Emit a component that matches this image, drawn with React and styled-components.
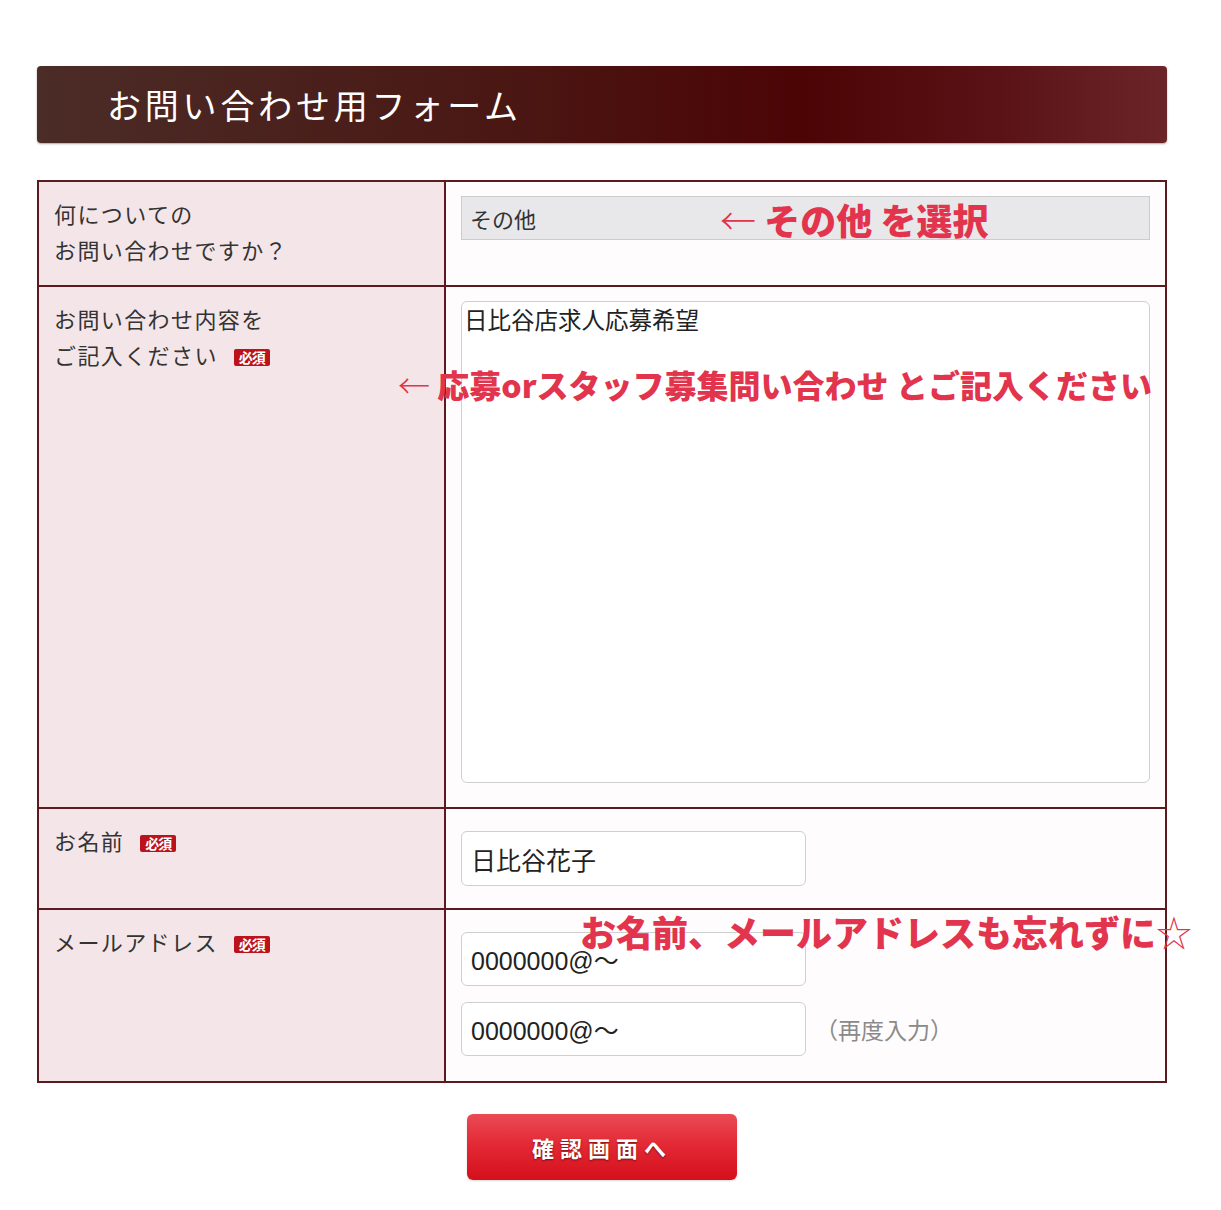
import React from "react";
import styled, { createGlobalStyle } from "styled-components";

const GlobalStyle = createGlobalStyle`
  body {
    margin: 0;
    background: #ffffff;
    font-family: "Noto Sans CJK JP", "Noto Sans", sans-serif;
    color: #333333;
  }
`;

const Page = styled.div`
  position: relative;
  width: 1221px;
  min-height: 1210px;
  padding: 66px 0 0 37px;
  box-sizing: border-box;
`;

const Header = styled.div`
  width: 1130px;
  height: 77px;
  border-radius: 4px;
  display: flex;
  align-items: center;
  padding-left: 70px;
  box-sizing: border-box;
  background: linear-gradient(90deg, #4b2c27 0%, #4a1814 40%, #4c0405 68%, #5a1216 85%, #6b2529 100%);
  box-shadow: 0 1px 2px rgba(0, 0, 0, 0.35);
`;

const HeaderTitle = styled.h1`
  margin: 0;
  font-size: 34px;
  font-weight: 400;
  letter-spacing: 3.8px;
  color: #ffffff;
`;

const FormTable = styled.table`
  width: 1130px;
  margin-top: 37px;
  border-collapse: collapse;
  border: 2px solid #5b1a20;
`;

const LabelCell = styled.th`
  width: 407px;
  box-sizing: border-box;
  padding: 13px 16px 18px 15px;
  background: #f4e6e8;
  border: 2px solid #5b1a20;
  text-align: left;
  vertical-align: top;
  font-size: 22px;
  font-weight: 400;
  line-height: 36px;
  letter-spacing: 1.4px;
  color: #333333;
`;

const FieldCell = styled.td`
  padding: ${({ $pad }) => $pad || "14px 15px"};
  background: #fefcfc;
  border: 2px solid #5b1a20;
  vertical-align: top;
`;

const Badge = styled.span`
  display: inline-flex;
  align-items: center;
  justify-content: center;
  width: 36px;
  height: 17px;
  margin-left: 16px;
  vertical-align: 1px;
  border-radius: 2px;
  background: #bb121b;
  color: #ffffff;
  font-size: 14px;
  font-weight: 700;
  line-height: 1;
  letter-spacing: -1px;
`;

const SelectBox = styled.div`
  height: 44px;
  box-sizing: border-box;
  display: flex;
  align-items: center;
  padding-left: 8px;
  background: #e8e8ea;
  border: 1px solid #cccccc;
  font-size: 22px;
  color: #333333;
`;

const TextArea = styled.div`
  height: 482px;
  box-sizing: border-box;
  padding: 0 2px;
  background: #ffffff;
  border: 1px solid #cfcfcf;
  border-radius: 6px;
  font-size: 23.5px;
  line-height: 34px;
  color: #222222;
`;

const InputRow = styled.div`
  display: flex;
  align-items: center;
  gap: 9px;
  & + & {
    margin-top: 16px;
  }
`;

const TextInput = styled.div`
  width: 345px;
  height: ${({ $h }) => $h || "55px"};
  box-sizing: border-box;
  display: flex;
  align-items: center;
  padding-left: 9px;
  background: #ffffff;
  border: 1px solid #cfcfcf;
  border-radius: 6px;
  font-family: "Liberation Sans", "Noto Sans CJK JP", sans-serif;
  font-size: 25px;
  color: #222222;
`;

const Hint = styled.span`
  font-size: 23px;
  color: #8a8a8a;
`;

const ButtonRow = styled.div`
  width: 1130px;
  display: flex;
  justify-content: center;
  padding-top: 31px;
`;

const SubmitButton = styled.button`
  width: 270px;
  height: 66px;
  border: none;
  border-radius: 6px;
  background: linear-gradient(180deg, #ea4b55 0%, #e32a36 45%, #d50f1c 100%);
  color: #ffffff;
  font-family: "Noto Sans CJK JP", sans-serif;
  font-size: 22px;
  font-weight: 700;
  letter-spacing: 6px;
  text-shadow: 0 1px 2px rgba(80, 0, 0, 0.7);
  box-shadow: 0 1px 2px rgba(0, 0, 0, 0.15);
`;

const Note = styled.div`
  position: absolute;
  left: ${({ $x }) => $x}px;
  top: ${({ $y }) => $y}px;
  font-size: ${({ $size }) => $size}px;
  font-weight: 900;
  line-height: 1;
  white-space: nowrap;
  color: #e2344c;
`;

const Thin = styled.span`
  font-weight: 300;
`;

export default function App() {
  return (
    <>
      <GlobalStyle />
      <Page>
        <Header>
          <HeaderTitle>お問い合わせ用フォーム</HeaderTitle>
        </Header>

        <FormTable>
          <tbody>
            <tr>
              <LabelCell>
                何についての
                <br />
                お問い合わせですか？
              </LabelCell>
              <FieldCell $pad="14px 15px 40px 15px">
                <SelectBox>その他</SelectBox>
              </FieldCell>
            </tr>
            <tr>
              <LabelCell>
                お問い合わせ内容を
                <br />
                ご記入ください<Badge>必須</Badge>
              </LabelCell>
              <FieldCell $pad="14px 15px 24px 15px">
                <TextArea>日比谷店求人応募希望</TextArea>
              </FieldCell>
            </tr>
            <tr>
              <LabelCell>
                お名前<Badge>必須</Badge>
              </LabelCell>
              <FieldCell $pad="22px 15px 22px 15px">
                <TextInput>日比谷花子</TextInput>
              </FieldCell>
            </tr>
            <tr>
              <LabelCell>
                メールアドレス<Badge>必須</Badge>
              </LabelCell>
              <FieldCell $pad="22px 15px 25px 15px">
                <InputRow>
                  <TextInput $h="54px">0000000@〜</TextInput>
                </InputRow>
                <InputRow>
                  <TextInput $h="54px">0000000@〜</TextInput>
                  <Hint>（再度入力）</Hint>
                </InputRow>
              </FieldCell>
            </tr>
          </tbody>
        </FormTable>

        <ButtonRow>
          <SubmitButton type="button">確認画面へ</SubmitButton>
        </ButtonRow>

        <Note $x={720} $y={201} $size={36}>
          <Thin>←</Thin> その他 を選択
        </Note>
        <Note $x={398} $y={368} $size={32}>
          <Thin>←</Thin> 応募orスタッフ募集問い合わせ とご記入ください
        </Note>
        <Note $x={580} $y={913} $size={36}>
          お名前、メールアドレスも忘れずに<Thin>☆</Thin>
        </Note>
      </Page>
    </>
  );
}
